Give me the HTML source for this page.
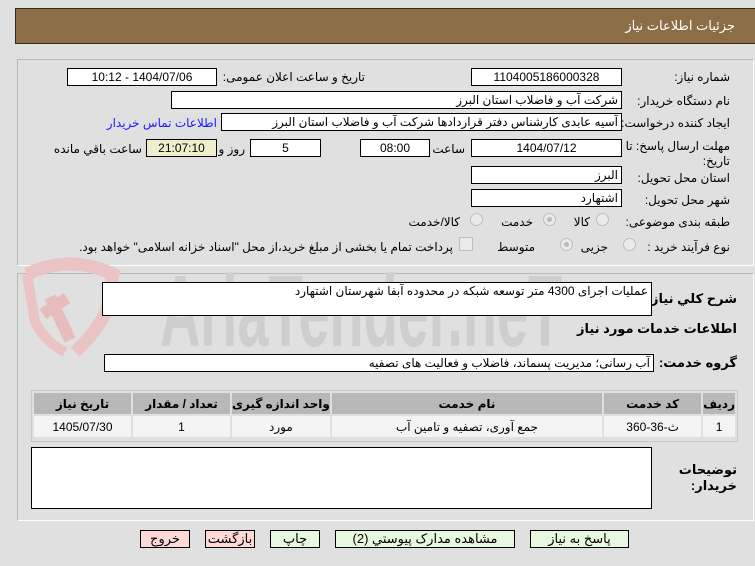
<!DOCTYPE html>
<html><head><meta charset="utf-8">
<style>
*{margin:0;padding:0;box-sizing:border-box}
body{width:755px;height:566px;background:#e0e0e0;font-family:Tahoma,"Liberation Sans","DejaVu Sans",sans-serif;font-size:12px;color:#000;position:relative;overflow:hidden}
.a{position:absolute;white-space:nowrap}
.in{position:absolute;background:#fff;border:1px solid #000;height:18px;line-height:16px;padding:0 3px;white-space:nowrap;direction:rtl}
.c{text-align:center}
.l{position:absolute;white-space:nowrap;direction:rtl;text-align:right}
.panel{position:absolute;border:1px solid #b8b8b8;border-right-color:#fff;border-bottom-color:#fff}
.rad{position:absolute;width:13px;height:13px;border-radius:50%;border:1px solid #bdbdbd;background:#eaeaea}
.rad.s::after{content:"";position:absolute;left:3px;top:3px;width:5px;height:5px;border-radius:50%;background:#bbb}
table{border-collapse:separate;border-spacing:2px}
td{text-align:center;height:21px}
.btn{position:absolute;height:18px;border:1px solid #000;text-align:center;line-height:16px;font-size:13px;direction:rtl}
</style></head><body>
<div class="a" style="left:15px;top:8px;width:745px;height:36px;background:#8b6d46;border:1px solid #3a2a18"></div>
<div class="l" style="right:20px;top:18px;color:#fff;font-size:13px">جزئیات اطلاعات نیاز</div>

<div class="panel" style="left:17px;top:59px;width:737px;height:207px"></div>
<div class="panel" style="left:17px;top:273px;width:737px;height:248px"></div>

<!-- watermark -->
<svg class="a" style="left:15px;top:252px" width="110" height="105" viewBox="0 0 110 105"><path d="M12 22 Q55 2 98 22 L92 58 Q80 82 60 100" fill="none" stroke="#eac4c4" stroke-width="13"/><path d="M12 22 L20 70 Q30 90 50 100" fill="none" stroke="#eac4c4" stroke-width="10"/><path d="M35 45 L55 88 M28 62 L52 46" stroke="#e6bcbc" stroke-width="12"/></svg>
<div class="a" style="left:160px;top:262px;line-height:1;font-family:'Liberation Sans Narrow','Liberation Sans',sans-serif;font-weight:bold;font-size:90px;color:#cecece;transform:scale(0.62,1.12);transform-origin:left top">AriaTender.neT</div>

<!-- row1 -->
<div class="l" style="right:25px;top:70px">شماره نیاز:</div>
<div class="in c" style="left:471px;top:68px;width:151px">1104005186000328</div>
<div class="l" style="right:390px;top:70px">تاریخ و ساعت اعلان عمومی:</div>
<div class="in c" style="left:67px;top:68px;width:150px">1404/07/06 - 10:12</div>
<!-- row2 -->
<div class="l" style="right:25px;top:94px">نام دستگاه خریدار:</div>
<div class="in" style="left:171px;top:91px;width:451px">شرکت آب و فاضلاب استان البرز</div>
<!-- row3 -->
<div class="l" style="right:25px;top:116px">ایجاد کننده درخواست:</div>
<div class="in" style="left:221px;top:113px;width:401px">آسیه عابدی کارشناس دفتر قراردادها شرکت آب و فاضلاب استان البرز</div>
<div class="l" style="right:538px;top:116px;color:#1a1aff">اطلاعات تماس خریدار</div>
<!-- row4 -->
<div class="l" style="right:25px;top:139px;line-height:15px">مهلت ارسال پاسخ: تا<br>تاریخ:</div>
<div class="in c" style="left:471px;top:139px;width:151px">1404/07/12</div>
<div class="l" style="right:290px;top:142px">ساعت</div>
<div class="in c" style="left:360px;top:139px;width:70px">08:00</div>
<div class="in c" style="left:250px;top:139px;width:71px">5</div>
<div class="l" style="right:510px;top:142px">روز و</div>
<div class="in c" style="left:146px;top:139px;width:71px;background:#eeeecc">21:07:10</div>
<div class="l" style="right:613px;top:142px">ساعت باقي مانده</div>
<!-- row5/6 -->
<div class="l" style="right:25px;top:171px">استان محل تحویل:</div>
<div class="in" style="left:471px;top:166px;width:151px">البرز</div>
<div class="l" style="right:25px;top:193px">شهر محل تحویل:</div>
<div class="in" style="left:471px;top:189px;width:151px">اشتهارد</div>
<!-- row7 -->
<div class="l" style="right:25px;top:215px">طبقه بندی موضوعی:</div>
<div class="rad" style="left:596px;top:213px"></div>
<div class="l" style="right:165px;top:215px">کالا</div>
<div class="rad s" style="left:543px;top:213px"></div>
<div class="l" style="right:222px;top:215px">خدمت</div>
<div class="rad" style="left:470px;top:213px"></div>
<div class="l" style="right:295px;top:215px">کالا/خدمت</div>
<!-- row8 -->
<div class="l" style="right:25px;top:240px">نوع فرآیند خرید :</div>
<div class="rad" style="left:623px;top:238px"></div>
<div class="l" style="right:147px;top:240px">جزیی</div>
<div class="rad s" style="left:560px;top:238px"></div>
<div class="l" style="right:220px;top:240px">متوسط</div>
<div class="a" style="left:459px;top:237px;width:14px;height:14px;border:1px solid #bdbdbd;background:#eaeaea"></div>
<div class="l" style="right:302px;top:240px">پرداخت تمام یا بخشی از مبلغ خرید،از محل "اسناد خزانه اسلامی" خواهد بود.</div>

<!-- panel 2 -->
<div class="l" style="right:18px;top:291px;font-weight:bold;font-size:13px">شرح کلي نیاز:</div>
<div class="in" style="left:102px;top:282px;width:550px;height:34px;background:#fff">عملیات اجرای 4300 متر توسعه شبکه در محدوده آبفا شهرستان اشتهارد</div>
<div class="l" style="right:18px;top:321px;font-weight:bold;font-size:13px">اطلاعات خدمات مورد نیاز</div>
<div class="l" style="right:18px;top:355px;font-weight:bold;font-size:13px">گروه خدمت:</div>
<div class="in" style="left:104px;top:354px;width:550px;background:#fff">آب رسانی؛ مدیریت پسماند، فاضلاب و فعالیت های تصفیه</div>

<div class="a" style="left:31px;top:390px;width:707px;height:52px;border:1px solid #c8c8c8;background:#e0e0e0">
<table style="width:705px;direction:rtl;font-size:12px;margin-top:0px">
<tr style="background:#b8b8b8;font-weight:bold"><td style="width:26px">ردیف</td><td style="width:97px">کد خدمت</td><td>نام خدمت</td><td style="width:94px">واحد اندازه گیری</td><td style="width:97px">تعداد / مقدار</td><td style="width:97px">تاریخ نیاز</td></tr>
<tr style="background:#f4f4f4"><td>1</td><td>ث-36-360</td><td>جمع آوری، تصفیه و تامین آب</td><td>مورد</td><td>1</td><td>1405/07/30</td></tr>
</table></div>

<div class="a" style="left:31px;top:447px;width:621px;height:62px;background:#fff;border:1px solid #000"></div>
<div class="l" style="right:18px;top:462px;font-weight:bold;font-size:13px;line-height:16px">توضیحات<br>خریدار:</div>

<div class="btn" style="left:530px;top:530px;width:99px;background:#e8f8e0">پاسخ به نیاز</div>
<div class="btn" style="left:335px;top:530px;width:180px;background:#e8f8e0">مشاهده مدارک پیوستي (2)</div>
<div class="btn" style="left:270px;top:530px;width:50px;background:#e8f8e0">چاپ</div>
<div class="btn" style="left:205px;top:530px;width:50px;background:#ffd8d8">بازگشت</div>
<div class="btn" style="left:140px;top:530px;width:50px;background:#ffd8d8">خروج</div>
</body></html>
